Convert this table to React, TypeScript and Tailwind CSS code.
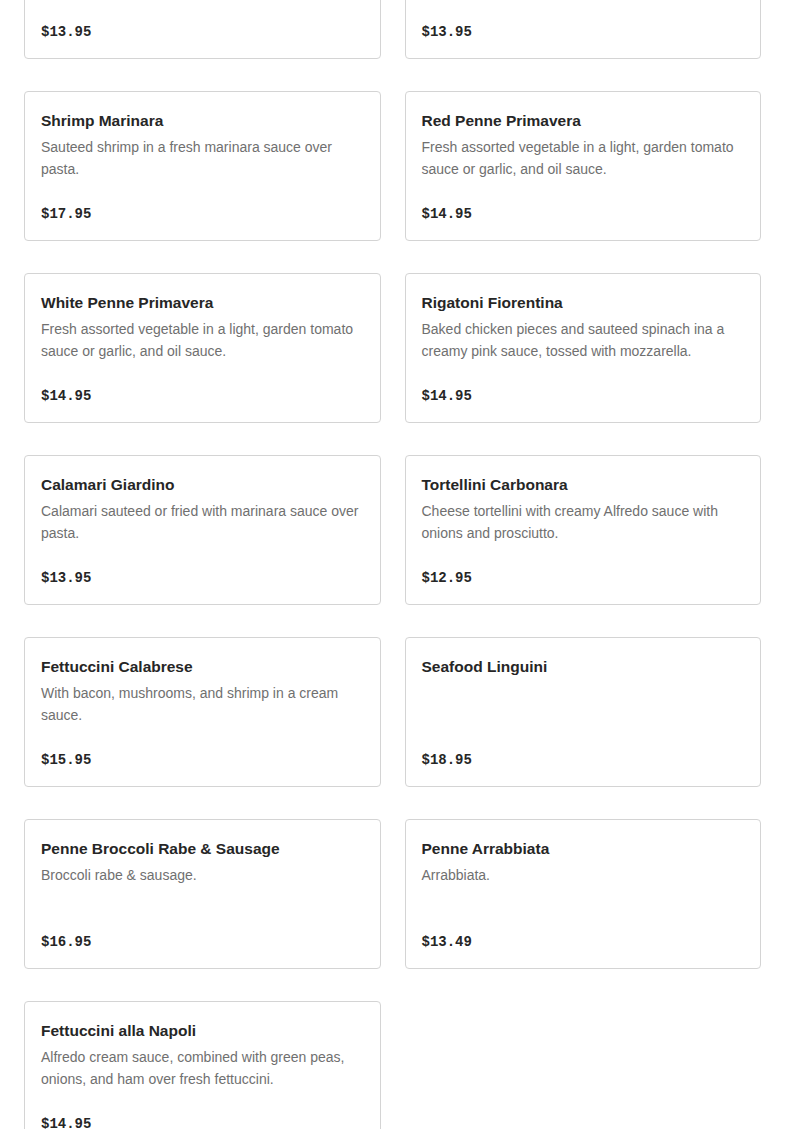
type Dish = {
  name: string;
  description?: string;
  price: string;
};

const dishes: Dish[] = [
  { name: "Linguini with Clam Sauce", description: "Fresh clams sauteed in a white or red sauce over linguini.", price: "$13.95" },
  { name: "Penne alla Vodka", description: "Penne in a creamy pink vodka sauce.", price: "$13.95" },
  { name: "Shrimp Marinara", description: "Sauteed shrimp in a fresh marinara sauce over pasta.", price: "$17.95" },
  { name: "Red Penne Primavera", description: "Fresh assorted vegetable in a light, garden tomato sauce or garlic, and oil sauce.", price: "$14.95" },
  { name: "White Penne Primavera", description: "Fresh assorted vegetable in a light, garden tomato sauce or garlic, and oil sauce.", price: "$14.95" },
  { name: "Rigatoni Fiorentina", description: "Baked chicken pieces and sauteed spinach ina a creamy pink sauce, tossed with mozzarella.", price: "$14.95" },
  { name: "Calamari Giardino", description: "Calamari sauteed or fried with marinara sauce over pasta.", price: "$13.95" },
  { name: "Tortellini Carbonara", description: "Cheese tortellini with creamy Alfredo sauce with onions and prosciutto.", price: "$12.95" },
  { name: "Fettuccini Calabrese", description: "With bacon, mushrooms, and shrimp in a cream sauce.", price: "$15.95" },
  { name: "Seafood Linguini", price: "$18.95" },
  { name: "Penne Broccoli Rabe & Sausage", description: "Broccoli rabe & sausage.", price: "$16.95" },
  { name: "Penne Arrabbiata", description: "Arrabbiata.", price: "$13.49" },
  { name: "Fettuccini alla Napoli", description: "Alfredo cream sauce, combined with green peas, onions, and ham over fresh fettuccini.", price: "$14.95" },
];

function DishCard({ dish }: { dish: Dish }) {
  return (
    <div className="flex h-[150px] flex-col rounded-[4px] border border-[#d4d4d4] bg-white px-4 pt-[17px] pb-4">
      <h3 className="text-[15.5px] leading-6 font-semibold text-[#262626]">{dish.name}</h3>
      {dish.description && (
        <p className="mt-[3px] text-[14px] leading-[22px] text-[#707070]">{dish.description}</p>
      )}
      <span className="mt-auto font-['Liberation_Mono',monospace] text-[14px] leading-5 font-bold text-[#262626]">
        {dish.price}
      </span>
    </div>
  );
}

export default function App() {
  return (
    <div className="h-[1129px] overflow-hidden bg-white font-['Liberation_Sans',Arial,sans-serif]">
      <div className="-mt-[91px] grid grid-cols-2 gap-x-6 gap-y-8 px-6">
        {dishes.map((dish) => (
          <DishCard key={dish.name} dish={dish} />
        ))}
      </div>
    </div>
  );
}
